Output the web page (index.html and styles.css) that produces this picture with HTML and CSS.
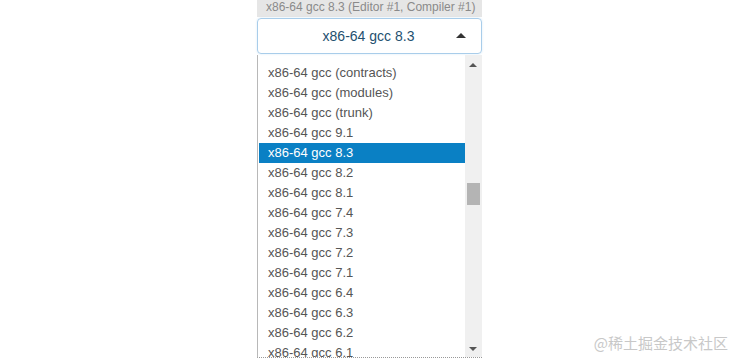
FILE: index.html
```html
<!DOCTYPE html>
<html lang="en">
<head>
    <meta charset="UTF-8">
    <title>Compiler picker</title>
    <link rel="stylesheet" href="styles.css">
</head>
<body>
    <div class="picker">
        <div class="picker-title">x86-64 gcc 8.3 (Editor #1, Compiler #1)</div>
        <div class="picker-select">
            <span class="picker-value">x86-64 gcc 8.3</span>
            <span class="caret-up"></span>
        </div>
        <div class="picker-list">
            <ul class="options">
                <li>x86-64 gcc (contracts)</li>
                <li>x86-64 gcc (modules)</li>
                <li>x86-64 gcc (trunk)</li>
                <li>x86-64 gcc 9.1</li>
                <li class="selected">x86-64 gcc 8.3</li>
                <li>x86-64 gcc 8.2</li>
                <li>x86-64 gcc 8.1</li>
                <li>x86-64 gcc 7.4</li>
                <li>x86-64 gcc 7.3</li>
                <li>x86-64 gcc 7.2</li>
                <li>x86-64 gcc 7.1</li>
                <li>x86-64 gcc 6.4</li>
                <li>x86-64 gcc 6.3</li>
                <li>x86-64 gcc 6.2</li>
                <li>x86-64 gcc 6.1</li>
            </ul>
            <div class="scrollbar">
                <span class="arrow-up"></span>
                <span class="thumb"></span>
                <span class="arrow-down"></span>
            </div>
        </div>
    </div>
    <div class="watermark">@稀土掘金技术社区</div>
</body>
</html>
```

FILE: styles.css
```css
body {
    margin: 0;
    height: 359px;
    overflow: hidden;
    background: #ffffff;
    font-family: Arial, "Liberation Sans", sans-serif;
    position: relative;
}
.picker {
    width: 225px;
    margin: 0 auto;
    padding-left: 1px;
}
.picker-title {
    height: 17px;
    line-height: 15px;
    background: #e6e6e6;
    color: #8a8a8a;
    font-size: 12px;
    padding-left: 9px;
    white-space: nowrap;
    overflow: hidden;
}
.picker-select {
    height: 34px;
    margin-top: 1px;
    border: 1px solid #a9cdea;
    border-radius: 4px;
    display: flex;
    align-items: center;
    position: relative;
    box-shadow: 0 0 2px rgba(102, 175, 233, 0.3);
}
.picker-value {
    flex: 1;
    text-align: center;
    color: #24506f;
    font-size: 14px;
    padding-right: 2px;
}
.caret-up {
    position: absolute;
    right: 15px;
    top: 14px;
    border-left: 5px solid transparent;
    border-right: 5px solid transparent;
    border-bottom: 5px solid #333;
}
.picker-list {
    margin-top: 1px;
    height: 302px;
    border-left: 1px solid #b8b8b8;
    border-bottom: 1px dotted #999;
    display: flex;
    overflow: hidden;
}
.options {
    list-style: none;
    margin: 0;
    padding: 8px 0 0 1px;
    flex: 1;
    font-size: 13px;
    color: #555;
}
.options li {
    height: 20px;
    line-height: 20px;
    padding-left: 9px;
    white-space: nowrap;
}
.options li.selected {
    background: #0a80c4;
    color: #ffffff;
}
.scrollbar {
    width: 17px;
    background: #f0f0f0;
    position: relative;
}
.arrow-up {
    position: absolute;
    left: 4px;
    top: 8px;
    border-left: 4px solid transparent;
    border-right: 4px solid transparent;
    border-bottom: 4px solid #555;
}
.arrow-down {
    position: absolute;
    left: 4px;
    bottom: 6px;
    border-left: 4px solid transparent;
    border-right: 4px solid transparent;
    border-top: 4px solid #555;
}
.thumb {
    position: absolute;
    left: 2px;
    top: 128px;
    width: 13px;
    height: 22px;
    background: #b4b4b4;
}
.watermark {
    position: absolute;
    right: 10px;
    bottom: 6px;
    font-family: "Noto Sans CJK SC", sans-serif;
    font-size: 15px;
    color: #c8c8c8;
}
```
